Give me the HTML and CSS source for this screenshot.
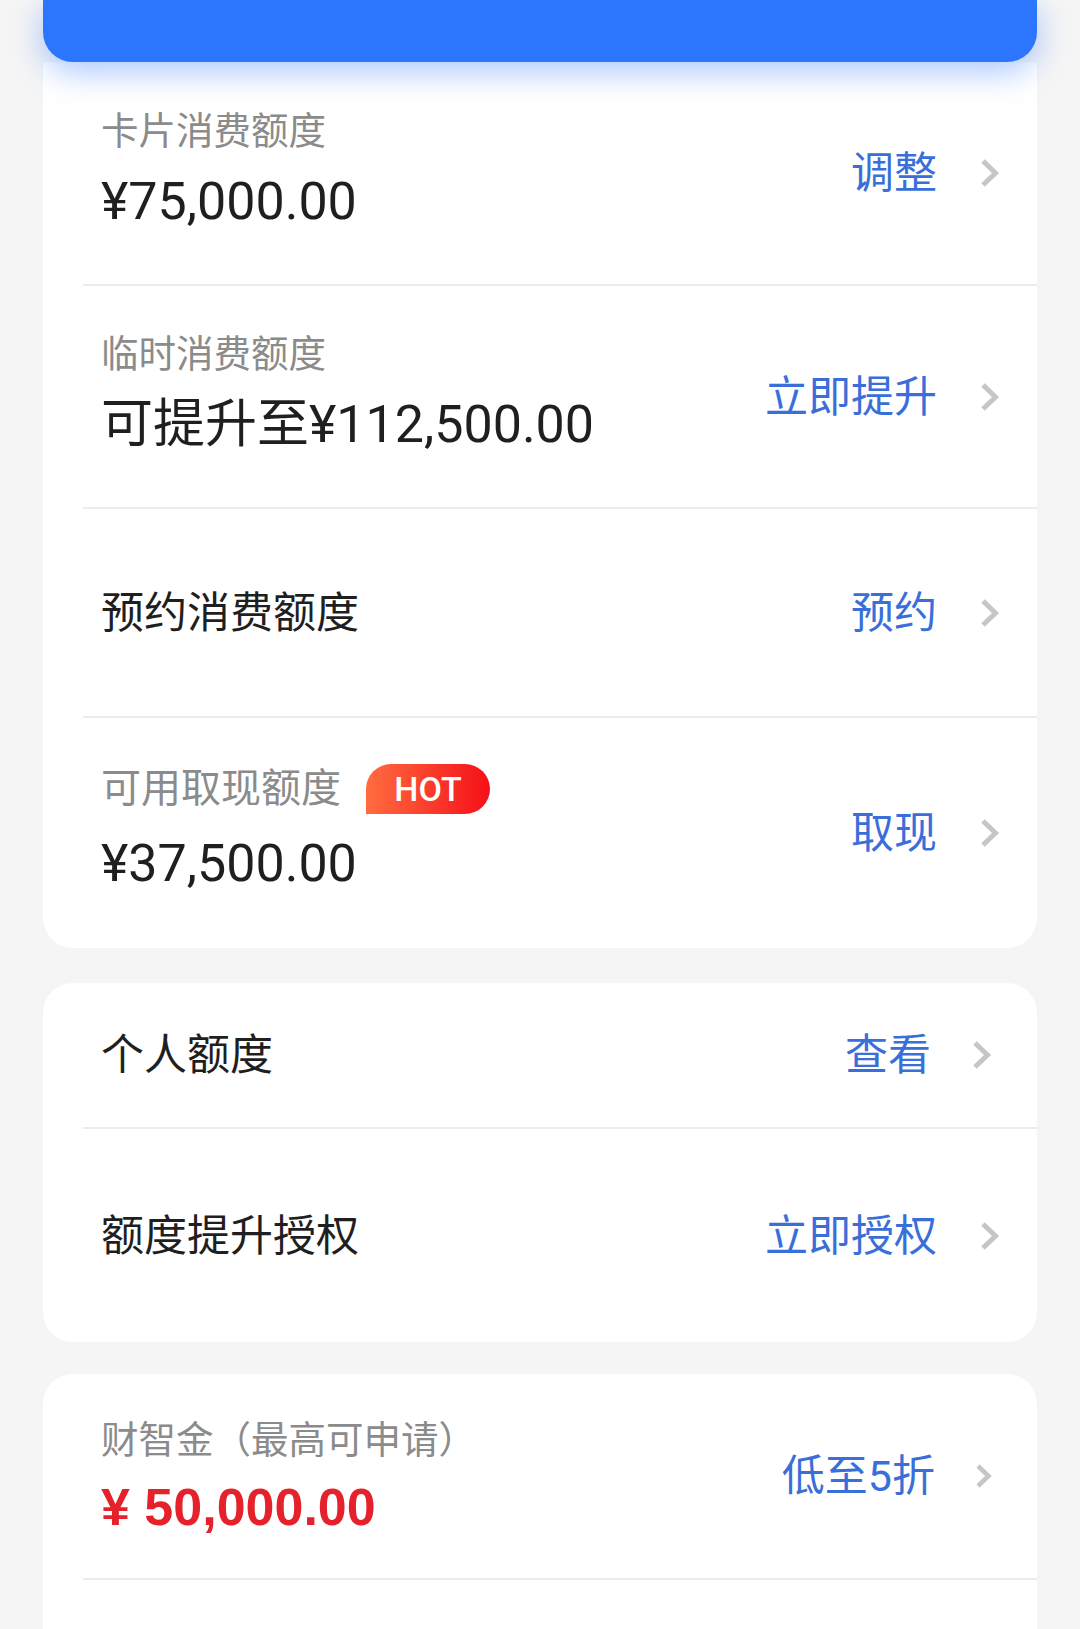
FILE: index.html
```html
<!DOCTYPE html>
<html lang="zh-CN">
<head>
<meta charset="utf-8">
<title>额度管理</title>
<link rel="stylesheet" href="styles.css">
</head>
<body>
<div class="page">
  <div class="hero"></div>

  <section class="card card--first">
    <div class="row row--card">
      <div class="info">
        <div class="label">卡片消费额度</div>
        <div class="amount">¥75,000.00</div>
      </div>
      <a class="action">调整<svg class="chev" viewBox="0 0 20 30" width="20" height="30"><polyline points="3,3 15.5,15 3,27"/></svg></a>
    </div>
    <div class="row row--temp">
      <div class="info">
        <div class="label">临时消费额度</div>
        <div class="amount">可提升至¥112,500.00</div>
      </div>
      <a class="action">立即提升<svg class="chev" viewBox="0 0 20 30" width="20" height="30"><polyline points="3,3 15.5,15 3,27"/></svg></a>
    </div>
    <div class="row row--reserve">
      <div class="title">预约消费额度</div>
      <a class="action">预约<svg class="chev" viewBox="0 0 20 30" width="20" height="30"><polyline points="3,3 15.5,15 3,27"/></svg></a>
    </div>
    <div class="row row--cash">
      <div class="info info--badge">
        <div class="label label--badge">可用取现额度<span class="hot">HOT</span></div>
        <div class="amount">¥37,500.00</div>
      </div>
      <a class="action">取现<svg class="chev" viewBox="0 0 20 30" width="20" height="30"><polyline points="3,3 15.5,15 3,27"/></svg></a>
    </div>
  </section>

  <section class="card card--second">
    <div class="row row--personal">
      <div class="title">个人额度</div>
      <a class="action">查看<svg class="chev" viewBox="0 0 20 30" width="20" height="30"><polyline points="3,3 15.5,15 3,27"/></svg></a>
    </div>
    <div class="row row--auth">
      <div class="title">额度提升授权</div>
      <a class="action">立即授权<svg class="chev" viewBox="0 0 20 30" width="20" height="30"><polyline points="3,3 15.5,15 3,27"/></svg></a>
    </div>
  </section>

  <section class="card card--third">
    <div class="row row--loan">
      <div class="info info--loan">
        <div class="label">财智金（最高可申请）</div>
        <div class="amount amount--red">¥ 50,000.00</div>
      </div>
      <a class="action action--small">低至5折<svg class="chev chev--small" viewBox="0 0 18 26" width="18" height="26"><polyline points="3,3 13.5,13 3,23"/></svg></a>
    </div>
    <div class="row row--next"></div>
  </section>
</div>
</body>
</html>
```

FILE: styles.css
```css
html, body {
  margin: 0;
  padding: 0;
  background: #f5f5f5;
}

body {
  font-family: "Roboto", "Noto Sans CJK SC", sans-serif;
  color: #1f1f1f;
}

.page {
  padding: 0 43px;
  overflow: hidden;
  height: 1629px;
  box-sizing: border-box;
}

.hero {
  position: relative;
  z-index: 2;
  height: 62px;
  background: #2c75fd;
  border-radius: 0 0 30px 30px;
  box-shadow: 0 10px 32px rgba(44, 117, 253, 0.4);
}

.card {
  background: #ffffff;
  border-radius: 30px;
}

.card--first {
  border-radius: 0 0 30px 30px;
}

.card--second {
  margin-top: 35px;
}

.card--third {
  margin-top: 32px;
  border-radius: 30px 30px 0 0;
}

.row {
  display: flex;
  align-items: center;
  justify-content: space-between;
  margin-left: 40px;
  padding: 0 37px 0 18px;
  border-bottom: 2px solid #ececec;
}

.row:last-child {
  border-bottom: none;
}

.row--card { height: 222px; }
.row--temp { height: 221px; }
.row--reserve { height: 207px; }
.row--cash { height: 230px; }
.row--personal { height: 144px; padding-right: 45px; }
.row--auth { height: 213px; }
.row--loan { height: 204px; padding-right: 44px; }
.row--next { height: 80px; }

.info {
  display: flex;
  flex-direction: column;
  padding-bottom: 9px;
}

.info--loan {
  padding-bottom: 0;
}

.label {
  font-size: 37.5px;
  line-height: 50px;
  color: #8b8b8b;
}

.label--badge {
  display: flex;
  align-items: center;
  font-size: 40px;
}

.amount {
  margin-top: 16px;
  font-size: 52px;
  line-height: 60px;
  color: #1f1f1f;
}

.info--badge .amount {
  margin-top: 20px;
}

.amount--red {
  margin-top: 12px;
  font-family: "Liberation Sans", "Noto Sans CJK SC", sans-serif;
  font-weight: 700;
  font-size: 52px;
  color: #e5222b;
}

.title {
  font-size: 43px;
  line-height: 60px;
  color: #1f1f1f;
}

.hot {
  display: inline-flex;
  align-items: center;
  justify-content: center;
  margin-left: 25px;
  width: 124px;
  height: 50px;
  border-radius: 25px 25px 25px 0;
  background: linear-gradient(90deg, #ff6c3f 0%, #f51018 100%);
  color: #ffffff;
  font-family: "Roboto", sans-serif;
  font-weight: 500;
  font-size: 34px;
  line-height: 50px;
}

.action {
  display: flex;
  align-items: center;
  font-size: 43px;
  line-height: 60px;
  color: #3a6fd9;
  text-decoration: none;
}

.chev {
  margin-left: 43px;
  fill: none;
  stroke: #c6c6c6;
  stroke-width: 5;
  stroke-linejoin: miter;
  stroke-linecap: butt;
}

.row--personal .chev {
  margin-left: 41px;
}

.chev--small {
  margin-left: 40px;
  stroke-width: 4.5;
}
```
